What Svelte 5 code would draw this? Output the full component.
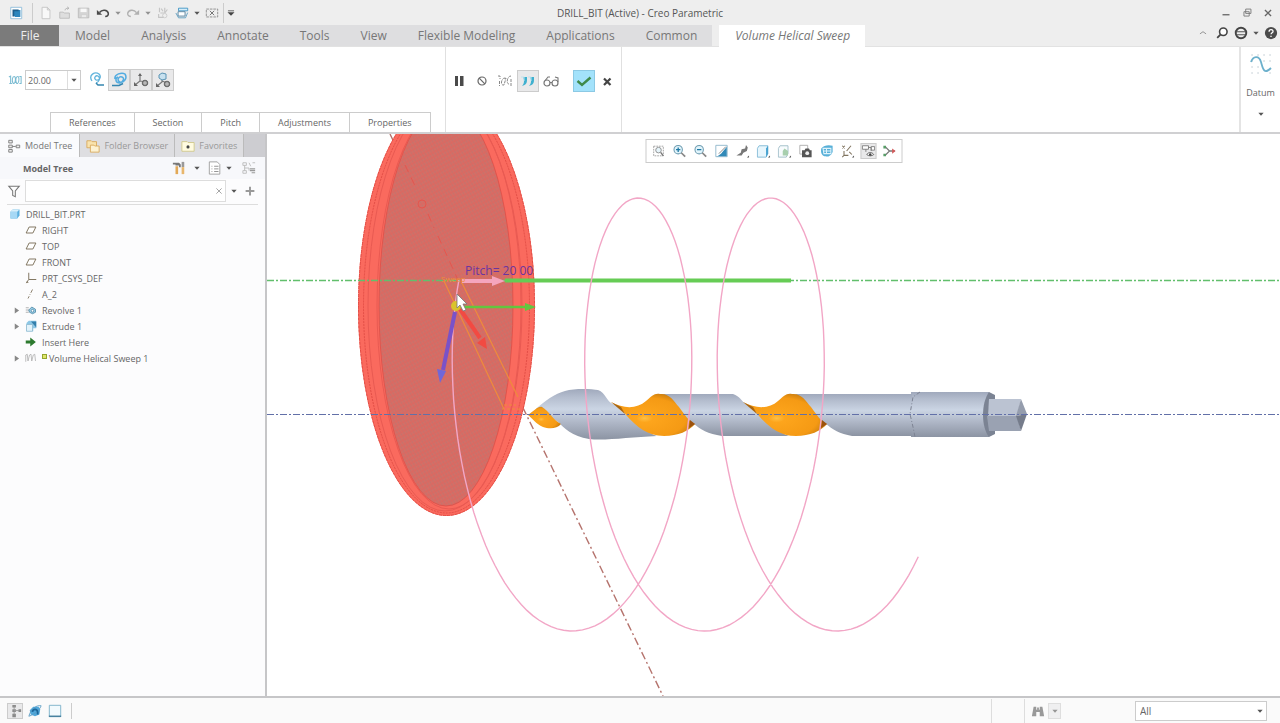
<script>
	let pitch = $state('20.00');
	let search = $state('');
	let filter = $state('All');

	const ribbonTabs = [
		'Model',
		'Analysis',
		'Annotate',
		'Tools',
		'View',
		'Flexible Modeling',
		'Applications',
		'Common'
	];
	const panels = ['References', 'Section', 'Pitch', 'Adjustments', 'Properties'];

	const quickAccess = [
		{ icon: 'newFile', label: 'New', dim: true },
		{ icon: 'open', label: 'Open', dim: true },
		{ icon: 'save', label: 'Save', dim: true },
		{ icon: 'undo', label: 'Undo' },
		{ icon: 'caret', label: 'Undo list', dim: true },
		{ icon: 'redo', label: 'Redo', dim: true },
		{ icon: 'caret', label: 'Redo list', dim: true },
		{ icon: 'regen', label: 'Regenerate', dim: true },
		{ icon: 'windows', label: 'Windows' },
		{ icon: 'caret', label: 'Windows list' },
		{ icon: 'closeWin', label: 'Close window' }
	];

	const viewTools = [
		{ icon: 'refit', label: 'Refit' },
		{ icon: 'zoomIn', label: 'Zoom in' },
		{ icon: 'zoomOut', label: 'Zoom out' },
		{ icon: 'repaint', label: 'Repaint' },
		{ icon: 'render', label: 'Rendering options' },
		{ icon: 'display', label: 'Display style' },
		{ icon: 'saved', label: 'Saved orientations' },
		{ icon: 'camera', label: 'View manager' },
		{ icon: 'persp', label: 'Perspective view' },
		{ icon: 'datumShow', label: 'Datum display filters' },
		{ icon: 'annot', label: 'Annotation display', on: true },
		{ icon: 'spin', label: 'Spin center' }
	];

	const tree = [
		{ icon: 'plane', name: 'RIGHT' },
		{ icon: 'plane', name: 'TOP' },
		{ icon: 'plane', name: 'FRONT' },
		{ icon: 'csys', name: 'PRT_CSYS_DEF' },
		{ icon: 'axis', name: 'A_2' },
		{ icon: 'revolve', name: 'Revolve 1', open: true },
		{ icon: 'extrude', name: 'Extrude 1', open: true },
		{ icon: 'insert', name: 'Insert Here' },
		{ icon: 'sweep', name: 'Volume Helical Sweep 1', open: true, fresh: true }
	];

	// helix seen from the side, one turn is 132.5 units along the axis
	function helix(from, to) {
		const pts = [];
		for (let a = from; a < to; a += 0.06) {
			const x = 572 + (132.5 * a) / (2 * Math.PI) + 84 * Math.sin(a);
			const y = 414.5 + 216.5 * Math.cos(a);
			pts.push(x.toFixed(1) + ',' + y.toFixed(1));
		}
		return pts.join(' ');
	}
	const trajectory = helix(-2.24, 4 * Math.PI + 0.9);

	const icons = {
		caret: '<path d="M5 6.5h6L8 10z" fill="#555"/>',
		app: '<path d="M2 1.5h12.500v13H2z" fill="#fff" stroke="#8cbcd9"/><path d="M5 4.500h8v8H7l-2-2z" fill="#2b86bd"/><path d="M4 4v8h2V6h5V4z" fill="#1b5f8d"/>',
		newFile: '<path d="M3.500 1.500h6l3 3v10h-9zM9.500 1.500v3h3" fill="#fff" stroke="#a9a9a9"/>',
		open: '<path d="M2 7h4l1 1h6v6H2z" fill="#d4d4d4" stroke="#999"/><path d="M8 5c0-2 2-2.500 4-2.500M10.500 1l2 1.500-2 1.500" fill="none" stroke="#888"/>',
		save: '<path d="M1.500 2.500h12v11h-12z" fill="#c4c4c4" stroke="#999"/><path d="M4 3h7v4H4z" fill="#fff"/><path d="M5 10h6v3H5z" fill="#eee" stroke="#aaa" stroke-width=".6"/>',
		undo: '<path d="M4 7.500c3-4 9-3 10 .5.400 2-.7 4-3.500 4" fill="none" stroke="#4b4b4b" stroke-width="1.800"/><path d="M1 4.500v5.500h6z" fill="#4b4b4b"/>',
		redo: '<path d="M12 7.500c-3-4-9-3-10 .5-.4 2 .7 4 3.500 4" fill="none" stroke="#888" stroke-width="1.600"/><path d="M15 4.500v5.500H9z" fill="#888"/>',
		regen: '<path d="M4 2v5M3 9v4h6M6 3l2 3M10 2v6M13 4l-3 4M5 8h4" fill="none" stroke="#aaa" stroke-width="1.300"/><circle cx="10" cy="11" r="2.500" fill="none" stroke="#b5b5b5"/>',
		windows: '<path d="M4 2.500h10.500v3H4z" fill="#d6eefa" stroke="#3e93c3"/><path d="M3.500 6.500h8v5h-8z" fill="#fff" stroke="#4f7f9b"/><path d="M1 8l3 5.500h8l2.500-6" fill="none" stroke="#5a9cbf"/>',
		closeWin: '<path d="M1.500 3.500h13v9h-13z" fill="none" stroke="#888" stroke-dasharray="3 1"/><path d="M5.500 5.500l5 5M10.500 5.500l-5 5" stroke="#666"/>',
		more: '<path d="M4.500 5.500h7" stroke="#555"/><path d="M4 7h8l-4 4z" fill="#444"/>',
		minimize: '<path d="M4 10h8" stroke="#666" stroke-width="1.500"/>',
		restore: '<path d="M6.500 3.500h6v5h-6zM4.500 6.500h6v5h-6z" fill="#eee" stroke="#777"/>',
		close: '<path d="M4.500 4.500l7 7M11.500 4.500l-7 7" stroke="#666" stroke-width="1.500"/>',
		up: '<path d="M4.500 9L8 6.500 11.500 9" fill="none" stroke="#888"/>',
		find: '<circle cx="9.500" cy="6.500" r="4.300" fill="#fff" stroke="#444" stroke-width="1.800"/><path d="M6.200 9.800L2.500 13.500" stroke="#444" stroke-width="2"/>',
		globe: '<circle cx="8" cy="8" r="6" fill="#eee" stroke="#444" stroke-width="2.200"/><path d="M2 6.500h12M3 10h10" stroke="#555" stroke-width="1.200"/>',
		help: '<circle cx="8" cy="8" r="7" fill="#4b4b4b"/><path d="M5.800 6.500c0-3 4.500-3 4.500-.3 0 1.500-2.200 1.700-2.200 3.300M8 11v1.500" fill="none" stroke="#fff" stroke-width="1.500"/>',
		pitchCoil: '<path d="M1 4.500l2-1v8M1.500 12h3M6 12c-2-3-1-8 1-8s2 6 0 8zM10 12c-2-3-1-8 1-8s2 6 0 8zM13 4h2v8h-2" fill="none" stroke="#7cbcd2" stroke-width="1.200"/>',
		leftHand: '<path d="M3 9C-1 3 6-1 10 2c3 3 0 7-3 6-3-2 0-5 2-4 3 2 1 6-2 7" fill="none" stroke="#62b4dc" stroke-width="1.300"/><path d="M7 11l2 2h6" fill="none" stroke="#3686b0" stroke-width="1.600"/>',
		rightHand: '<path d="M4 7c-1-5 7-7 10-5 3 5-2 9-5 8-4-2-1-6 2-5s1 5-2 6c-5 0-5-5-2-6" fill="none" stroke="#53ace0" stroke-width="1.500"/><path d="M1 13.500h7l4-2" fill="none" stroke="#3686b0" stroke-width="1.600"/>',
		frame: '<path d="M7 2v7l-5 4M7 9l7 1" fill="none" stroke="#777" stroke-width="1.200"/><path d="M5 4l2-3 2 3zM1 10v4h4z" fill="#666"/><circle cx="12" cy="11" r="2.800" fill="#888" stroke="#666"/><path d="M10 11h4M12 9v4" stroke="#ddd" stroke-width=".7"/>',
		frameFit: '<path d="M7 6v4l-5 4M7 9l5 2" fill="none" stroke="#777" stroke-width="1.200"/><path d="M4 3l3-2 4 1v5l-4 1-3-2z" fill="#c8e1ef" stroke="#5a94b5"/><path d="M1 11v4h4z" fill="#666"/><circle cx="12" cy="12" r="2.800" fill="#888" stroke="#666"/><path d="M10 12h4M12 10v4" stroke="#ddd" stroke-width=".7"/>',
		pause: '<path d="M4 3h3v10H4zM9 3h3.500v10H9z" fill="#4a4a4a"/>',
		none: '<circle cx="8" cy="8" r="4" fill="none" stroke="#666" stroke-width="1.200"/><path d="M5.200 5.200l5.600 5.600" stroke="#666" stroke-width="1.200"/>',
		unattached: '<path d="M1 3h2v3M2.500 8v5M8 5c-4 0-5 8-1 7l2-7-2 1M14 3c-4 0-5 8-2 8M14 6v7" fill="none" stroke="#888" stroke-dasharray="3 1"/>',
		attached: '<path d="M3 4h4v3c0 3-1 5-5 6 2-2 2-4 2-6zM10 4h4v3c0 3-1 5-5 6 2-2 2-4 2-6z" fill="#3fb0cf"/><path d="M1 4h3v4M8 4h3v4" fill="none" stroke="#bfe4ef"/>',
		glasses: '<circle cx="4" cy="10" r="3" fill="none" stroke="#777" stroke-width="1.200"/><circle cx="12" cy="10" r="3" fill="none" stroke="#777" stroke-width="1.200"/><path d="M7 9.500h2M1 9l4-5h2M15 9V5l-3-1" fill="none" stroke="#777" stroke-width="1.100"/>',
		check: '<path d="M1.500 8l4.500 4 8.500-7.500" fill="none" stroke="#3f8a4b" stroke-width="2.400"/>',
		cancel: '<path d="M5 5.500l6.500 6.500M11.500 5.500L5 12" stroke="#444" stroke-width="2.200"/>',
		treeTab: '<path d="M2 1.500h4v3H2zM2 7h4v3H2zM2 12h4v3H2zM10.500 7h4v3h-4zM6 8.500h4" fill="#eee" stroke="#777"/>',
		folders: '<path d="M1 2h5l1 1h5v7H1z" fill="#f9e3ad" stroke="#d8a85a"/><path d="M5 7h4l1 1h5v7H5z" fill="#fdf2d2" stroke="#d8a85a"/>',
		favorites: '<path d="M1 3h6l1 1h7v10H1z" fill="#fffbe0" stroke="#cfc789"/><circle cx="8" cy="9" r="1.800" fill="#444"/>',
		tools: '<path d="M1 2h7l2 2v3H8V5H4V4H1z" fill="#777"/><path d="M4 6h3v9H4z" fill="#e2a956"/><path d="M11 1h3v6h-3z" fill="#999"/><path d="M11 7h3v8h-3z" fill="#e8b76c"/>',
		sheet: '<path d="M1.500 1h9l3 3v11h-12z" fill="#fff" stroke="#999"/><path d="M4 6h1M7 6h5M4 9h1M7 9h5M4 12h1M7 12h5" stroke="#888"/>',
		treeFind: '<path d="M1 2h4v3H1zM1 11h4v3H1zM3 5v6M8 2l2 4M12 2h3M3 8h5v3" fill="none" stroke="#b9b9b9"/><path d="M9 9h6M9 11h6M11 13.500h4" stroke="#999" stroke-width="1.200"/>',
		funnel: '<path d="M2 2.500h12L9.500 8v6.500l-3-1.500V8z" fill="#fff" stroke="#777" stroke-width="1.200"/>',
		clear: '<path d="M5 5l6 6M11 5l-6 6" stroke="#999"/>',
		plus: '<path d="M8 3v10M3 8h10" stroke="#999" stroke-width="2.200"/>',
		part: '<path d="M2 5l3-3h9v8l-3 4H2z" fill="#5aaede"/><path d="M2 5h9v9H2z" fill="#a6d8f5"/><path d="M2 5l3-3h9l-3 3z" fill="#d6effc"/>',
		plane: '<path d="M5.500 4h9l-4 8h-9z" fill="#fff" stroke="#80745f" stroke-width="1.300"/>',
		csys: '<path d="M5 1v9h10M5 10l-3 4" fill="none" stroke="#80745f" stroke-width="1.300"/><path d="M3 12l-2 3 4-1z" fill="#80745f"/>',
		axis: '<path d="M10 2L4 14" stroke="#80745f" stroke-width="1.200" stroke-dasharray="5 2 1 2"/>',
		revolve: '<path d="M1 5h4M1 11h4M1 8h5" stroke="#999"/><path d="M5 8l4-4 5 3v4l-4 2-4-2z" fill="#9bcfe8" stroke="#437f9e"/><circle cx="10" cy="9" r="1.800" fill="#fff" stroke="#437f9e"/>',
		extrude: '<path d="M5 1h10v10h-4v4H2V4z" fill="#8cc7e6"/><path d="M2 6h8v9H2z" fill="#e3f3fb" stroke="#8bb7cd"/><path d="M8 2h7v8z" fill="#347fab"/>',
		insert: '<path d="M1 6h6V2l7.500 6L7 14v-4H1z" fill="#2d7a2f"/>',
		sweep: '<path d="M1 13V4l2-1 1 9 2-8 2-1 1 9 2-8 2-1 1 9" fill="none" stroke="#aaa"/>',
		refit: '<path d="M2.500 2.500h11v11h-11z" fill="none" stroke="#9a9a9a" stroke-dasharray="2 1"/><circle cx="8" cy="7" r="3.200" fill="#e6f4fa" stroke="#888"/><path d="M10.500 9.500l3 4" stroke="#777" stroke-width="1.600"/>',
		zoomIn: '<circle cx="6.500" cy="6.500" r="4.800" fill="#e1f4fb" stroke="#6d9bb0" stroke-width="1.200"/><path d="M4 6.500h5M6.500 4v5" stroke="#1f78a4" stroke-width="1.500"/><path d="M10 10l4.500 4.500" stroke="#888" stroke-width="2"/>',
		zoomOut: '<circle cx="6.500" cy="6.500" r="4.800" fill="#e1f4fb" stroke="#6d9bb0" stroke-width="1.200"/><path d="M4 6.500h5" stroke="#1f78a4" stroke-width="1.500"/><path d="M10 10l4.500 4.500" stroke="#888" stroke-width="2"/>',
		repaint: '<path d="M1.500 1.500h13v13h-13z" fill="#fff" stroke="#8cb5c9"/><path d="M14 3v11H2c5-1 7-5 12-11z" fill="#3189b7"/><path d="M13 3L5 11" stroke="#777"/>',
		render: '<path d="M1 13l5-3 1-4 4-1 1-4 2 3-1 4-4 2-2 3z" fill="#777"/><path d="M15.500 15.500V13L13 15.500z" fill="#555"/>',
		display: '<path d="M1 5l2-3h10v9l-2 4H1z" fill="#e7f6fd" stroke="#7ab6d3"/><path d="M11 5l2-3v9l-2 4z" fill="#3a9bcc"/><path d="M15.500 15.500V13L13 15.500z" fill="#555"/>',
		saved: '<path d="M1 5l2-3h9v9l-2 4H1z" fill="#f7fbfd" stroke="#9dbac6"/><path d="M8 5l4 3v5H6V8z" fill="#a8cfae"/><path d="M15.500 15.500V13L13 15.500z" fill="#555"/>',
		camera: '<path d="M1.500 1.500h9v10h-9z" fill="#fff" stroke="#aaa"/><path d="M4 7h3l1-2h4l1 2h2v8H4z" fill="#555"/><circle cx="10" cy="10.500" r="2.200" fill="#eee"/>',
		persp: '<path d="M2 5c3-4 9-4 13-3v7c-2 5-6 6-8 5-4 0-6-4-5-9z" fill="#58b0d8"/><path d="M4 5h9v6H5zM4 8h9M8 5v6" fill="none" stroke="#dff3fc" stroke-width="1.200"/>',
		datumShow: '<path d="M2 2l3 3M5 2L2 5M7 8l5-6M4 8v5h5M4 13l-2 2M10 9l3 3" fill="none" stroke="#80745f" stroke-width="1.200"/><path d="M15.500 15.500V13L13 15.500z" fill="#555"/>',
		annot: '<path d="M1 2h7v4H1zM5 6v3M8 4h3v4M11 3h4v4h-4z" fill="#fff" stroke="#777"/><path d="M6 12c2-3 6-3 8 0-2 2-6 2-8 0z" fill="#fff" stroke="#555"/><circle cx="10" cy="12" r="1.400" fill="#444"/>',
		spin: '<path d="M3 3l5 5-5 5M8 8h6" fill="none" stroke="#777" stroke-width="1.500"/><path d="M1 2h3v3H1zM1 11h3v3H1z" fill="#599d68"/><path d="M11 5l4 3-4 3z" fill="#d25a5a"/>',
		statTree: '<path d="M5 1h4v3H5zM5 6h4v3H5zM5 11h4v4H5zM12 6h3v3h-3z" fill="#888"/><path d="M7 2v11M7 7.500h6" stroke="#999"/>',
		statWeb: '<path d="M2 7l4-4h6l2 3-1 6-5 2-5-2z" fill="#4fa7da"/><path d="M1 14C3 6 9 1 15 2c-1 3-5 9-14 12" fill="none" stroke="#5a9cc4"/><path d="M5 9c1-4 5-4 6 0v3" fill="none" stroke="#1d679b" stroke-width="2"/>',
		statFull: '<path d="M1.500 1.500h13v13h-13z" fill="#f2fafd" stroke="#77aec8"/><path d="M1 14h14" stroke="#447f9d" stroke-width="1.600"/>',
		binoc: '<path d="M3 3h3v3l1 1V4h2v3l1-1V3h3l2 11h-5V9H6v5H1z" fill="#999"/>',
		datum: '<path d="M3 4h.1M9 4h.1M15 4h.1M21 4h.1M3 10h.1M15 10h.1M21 10h.1M3 16h.1M9 16h.1M3 22h.1M9 22h.1M21 22h.1" stroke="#c3ced4" stroke-width="1.500" stroke-linecap="round"/><path d="M2 11c2-6 8-7 10 0s3 13 10 6" fill="none" stroke="#6cb0cc" stroke-width="1.800"/>'
	};
</script>

{#snippet icon(name)}
	<svg class="icon" viewBox="0 0 16 16" aria-hidden="true">{@html icons[name]}</svg>
{/snippet}

{#snippet tool(name, label, cls = '')}
	<button type="button" class="tool {cls}" aria-label={label}>{@render icon(name)}</button>
{/snippet}

<div class="app">
	<header class="titlebar">
		<div class="quick">
			{@render icon('app')}
			<span class="sep first"></span>
			{#each quickAccess as q}
				{@render tool(q.icon, q.label, (q.icon === 'caret' ? 'narrow ' : '') + (q.dim ? 'dim' : ''))}
			{/each}
			<span class="sep"></span>
			{@render tool('more', 'Customize toolbar', 'narrow')}
		</div>
		<h1>DRILL_BIT (Active) - Creo Parametric</h1>
		<div class="window-buttons">
			{@render tool('minimize', 'Minimize')}
			{@render tool('restore', 'Restore')}
			{@render tool('close', 'Close')}
		</div>
	</header>

	<nav class="tabs">
		<button type="button" class="tab file">File</button>
		{#each ribbonTabs as t}
			<button type="button" class="tab">{t}</button>
		{/each}
		<button type="button" class="tab active">Volume Helical Sweep</button>
		<div class="tab-tools">
			{@render tool('up', 'Minimize ribbon')}
			{@render tool('find', 'Command search')}
			{@render tool('globe', 'Learning')}
			{@render tool('caret', 'Learning list', 'narrow')}
			{@render tool('help', 'Help')}
		</div>
	</nav>

	<section class="ribbon">
		<div class="options">
			<div class="controls">
				{@render icon('pitchCoil')}
				<div class="combo">
					<input type="text" aria-label="Pitch value" bind:value={pitch} />
					{@render tool('caret', 'Recent values', 'drop')}
				</div>
				<div class="toggles">
					{@render tool('leftHand', 'Left handed rule', 'big')}
					{@render tool('rightHand', 'Right handed rule', 'big on')}
					{@render tool('frame', 'Axis orientation', 'big on')}
					{@render tool('frameFit', 'Tool orientation', 'big on')}
				</div>
			</div>
			<div class="panels">
				{#each panels as p}
					<button type="button" class="panel">{p}</button>
				{/each}
			</div>
		</div>
		<div class="actions">
			{@render tool('pause', 'Pause', 'big')}
			{@render tool('none', 'No preview', 'big')}
			{@render tool('unattached', 'Unattached preview', 'big')}
			{@render tool('attached', 'Attached preview', 'big on')}
			{@render tool('glasses', 'Verify', 'big')}
			{@render tool('check', 'OK', 'big ok')}
			{@render tool('cancel', 'Cancel', 'big')}
		</div>
		<button type="button" class="datum">
			<svg class="datum-icon" viewBox="0 0 24 26" aria-hidden="true">{@html icons.datum}</svg>
			<span>Datum</span>
			{@render icon('caret')}
		</button>
	</section>

	<main>
		<aside>
			<div class="side-tabs">
				<button type="button" class="side-tab current">{@render icon('treeTab')}Model Tree</button>
				<button type="button" class="side-tab">{@render icon('folders')}Folder Browser</button>
				<button type="button" class="side-tab">{@render icon('favorites')}Favorites</button>
			</div>
			<div class="side-head">
				<h2>Model Tree</h2>
				{@render tool('tools', 'Settings')}
				{@render tool('caret', 'Settings list')}
				{@render tool('sheet', 'Show')}
				{@render tool('caret', 'Show list', 'narrow')}
				{@render tool('treeFind', 'Find in tree', 'last')}
			</div>
			<div class="search">
				{@render icon('funnel')}
				<div class="search-box">
					<input type="text" aria-label="Search tree" bind:value={search} />
					{@render tool('clear', 'Clear', 'drop')}
				</div>
				{@render tool('caret', 'Search options')}
				{@render tool('plus', 'Add filter')}
			</div>
			<ul class="tree">
				<li class="root">{@render icon('part')}<span>DRILL_BIT.PRT</span></li>
				{#each tree as node}
					<li>
						{#if node.open}
							<svg class="arrow" viewBox="0 0 8 8" aria-hidden="true">
								<path d="M2 0.500v7L7 4z" fill="#888" />
							</svg>
						{:else}
							<i class="arrow"></i>
						{/if}
						{@render icon(node.icon)}
						{#if node.fresh}<i class="fresh"></i>{/if}
						<span>{node.name}</span>
					</li>
				{/each}
			</ul>
		</aside>

		<div class="canvas">
			<svg class="scene" viewBox="267 134 1013 562" preserveAspectRatio="xMinYMin meet" role="img" aria-label="Drill bit">
				<defs>
					<linearGradient id="steel" x1="0" y1="0" x2="0" y2="1">
						<stop offset="0" stop-color="#a0a9bc" />
						<stop offset="0.15" stop-color="#b3bccd" />
						<stop offset="0.4" stop-color="#cbd5e4" />
						<stop offset="0.65" stop-color="#b0b8c8" />
						<stop offset="1" stop-color="#8c94a3" />
					</linearGradient>
					<radialGradient id="gold" cx="0.4" cy="0.58" r="0.65">
						<stop offset="0" stop-color="#ffc044" />
						<stop offset="0.15" stop-color="#fda51c" />
						<stop offset="0.75" stop-color="#f59a14" />
						<stop offset="1" stop-color="#c2780e" />
					</radialGradient>
					<pattern id="mesh" width="3" height="4" patternUnits="userSpaceOnUse" patternTransform="rotate(-28)">
						<path d="M0 0v4" stroke="#b07a76" stroke-width="1.200" />
						<path d="M0 2h3" stroke="#ea5f58" stroke-width="0.800" />
					</pattern>
				</defs>

				<!-- shank and flutes -->
				<path d="M911 392h78v45h-78z" fill="url(#steel)" />
				<path d="M797 394H912V436H852C840 434 832 429 826 424C818 422 800 408 792 396z" fill="url(#steel)" />
				<path d="M660 394H733C740 396 742 402 746 404C760 410 775 431 789 436H722C708 434 700 429 694 424C686 422 668 408 660 396z" fill="url(#steel)" />
				<path d="M534 411C545 400 555 394 565 391C575 388 592 389 598 390C606 393 606 401 613 404C628 410 643 432 657 436C630 437 605 441 589 439C572 436 564 428 558 422L543 412z" fill="url(#steel)" />
				<path d="M528 415C534 411 538 406 542 407C549 411 553 420 561 424C557 429 549 429 543 427C536 424 532 418 528 415z" fill="url(#gold)" />
				<g id="flute">
					<path d="M611 402C624 409 637 409 646 401C652 396 654 393 660 394C669 393 673 400 679 407C685 415 689 422 695 424C689 431 678 436 664 436C647 436 636 426 627 416C622 410 618 406 611 402z" fill="url(#gold)" />
					<path d="M611 402l10 5 4 7z" fill="#a9650f" />
					<path d="M690 420l5 4-6 4z" fill="#9c520d" />
				</g>
				<use href="#flute" x="132" />
				<path d="M920 392l-7 5-3 17 3 13 2 10" fill="none" stroke="#7d8393" stroke-dasharray="4 2 1 2" />
				<path d="M989 392l6 3v39l-6 3c-8-10-8-34 0-45z" fill="#7b8393" />
				<path d="M989 399h32l-4 17h-29z" fill="#bbc3d2" />
				<path d="M987 416h30l4 15h-32z" fill="#9aa2b2" />
				<path d="M1021 399l6 15-11 2z" fill="#959dad" />
				<path d="M1016 416l11-2-6 17z" fill="#757c8b" />

				<!-- helix removed volume -->
				<path d="M390 134L663 696" stroke="#b5736d" stroke-width="1.400" stroke-dasharray="8 3 2 3" />
				<ellipse cx="446.500" cy="306" rx="88.500" ry="210" fill="#fa6a5e" />
				<g fill="none" stroke="#e24d45">
					<ellipse cx="446.500" cy="306" rx="88" ry="209.500" stroke-dasharray="3 1" />
					<ellipse cx="446.500" cy="306" rx="83" ry="207" stroke-dasharray="2 1" />
					<ellipse cx="445" cy="306" rx="77" ry="205" stroke="#e95a52" />
					<ellipse cx="449" cy="306" rx="72" ry="203" stroke="#e95a52" />
				</g>
				<ellipse cx="446" cy="306" rx="67" ry="200" fill="#d56e66" />
				<ellipse cx="446" cy="306" rx="67" ry="200" fill="url(#mesh)" opacity="0.700" stroke="#df4b44" />
				<g stroke="#e5564e" fill="none">
					<path d="M405 165l12 25M428 214l6 14M438 236l20 44" stroke-dasharray="8 6" />
					<circle cx="422" cy="204" r="4" />
				</g>

				<!-- datum axes -->
				<path d="M267 280.500H1280" stroke="#62bf6c" stroke-width="1.500" stroke-dasharray="7 2 2 2" />
				<path d="M267 414.500H1280" stroke="#6270a8" stroke-width="1.200" stroke-dasharray="7 2 2 2" />
				<path d="M505 280.500H791" stroke="#66cc55" stroke-width="4" />

				<polyline points={trajectory} fill="none" stroke="#f2a6c6" stroke-width="1.400" />

				<g fill="none" stroke="#ee8b3c" stroke-width="1.200">
					<path d="M444 281L504 409M462 283L518 397" />
					<path d="M502 409h18M504 405h12" stroke-dasharray="3 2" />
				</g>
				<path d="M458 307H526" stroke="#62c63f" stroke-width="2.500" />
				<path d="M525 303l11 4-11 4z" fill="#62c63f" />
				<path d="M460 309L480 338" stroke="#f24a42" stroke-width="4" />
				<path d="M477 343l8-6 2 12z" fill="#f24a42" />
				<path d="M455 312L443 370" stroke="#7a52c8" stroke-width="4" />
				<path d="M437 369l9 2-6 12z" fill="#7067d8" />
				<path d="M462 281H494" stroke="#f5a5bd" stroke-width="4" />
				<path d="M492 276l13 5-13 5z" fill="#f5a5bd" />
				<circle cx="456" cy="306" r="5" fill="#d9c32c" />
				<text x="441" y="282" class="note">Sweep</text>
				<text x="465" y="275" class="dim-text">Pitch= 20 00</text>
				<path d="M457 294v14l3-3 3 6 3-1-3-6h4z" fill="#fff" stroke="#777" stroke-width="0.800" />
			</svg>
			<div class="view-bar">
				{#each viewTools as v}
					{@render tool(v.icon, v.label, v.on ? 'on' : '')}
				{/each}
			</div>
		</div>
	</main>

	<footer>
		<div class="status-left">
			{@render tool('statTree', 'Toggle tree', 'on')}
			{@render tool('statWeb', 'Toggle browser')}
			{@render tool('statFull', 'Full screen')}
			<span class="sep"></span>
		</div>
		<div class="status-cell"></div>
		<div class="status-find">
			{@render tool('binoc', 'Find')}
			{@render tool('caret', 'Find list', 'drop on dim')}
		</div>
		<div class="filter">
			<select aria-label="Selection filter" bind:value={filter}>
				<option>All</option>
				<option>Features</option>
				<option>Geometry</option>
			</select>
			{@render icon('caret')}
		</div>
	</footer>
</div>

<style>
	:global(body) {
		margin: 0;
	}
	.app {
		display: flex;
		flex-direction: column;
		min-height: 100vh;
		font-family: 'Open Sans', 'Noto Sans', sans-serif;
		font-size: 9px;
		color: #666;
		background: #fff;
	}
	button,
	input,
	select {
		box-sizing: border-box;
		margin: 0;
		padding: 0;
		border: 0;
		background: none;
		font: inherit;
		color: inherit;
	}
	.icon {
		display: block;
		flex: none;
		width: 14px;
		height: 14px;
	}
	.tool {
		display: flex;
		align-items: center;
		justify-content: center;
		flex: none;
		width: 16px;
		height: 16px;
	}
	.tool.narrow {
		width: 8px;
	}
	.tool.dim {
		opacity: 0.6;
	}
	.tool.on {
		background: #e9e9ea;
		outline: 1px solid #ccc;
		outline-offset: -1px;
	}
	.tool.big {
		width: 22px;
		height: 22px;
	}
	.tool.big .icon {
		width: 16px;
		height: 16px;
	}
	.tool.ok {
		margin-left: 10px;
		background: #a3e2fb;
		outline: 1px solid #8cc9e4;
		outline-offset: -1px;
	}
	.sep {
		width: 1px;
		align-self: stretch;
		margin: 0 4px;
		background: #ccc;
	}

	/* title bar */
	.titlebar {
		display: grid;
		grid-template-columns: 1fr auto 1fr;
		align-items: center;
		height: 25px;
		background: #eee;
	}
	.quick {
		display: flex;
		align-items: center;
		gap: 3px;
		height: 20px;
		padding-left: 9px;
	}
	.quick .sep {
		margin: 0;
	}
	.quick .first {
		margin: 0 2px 0 6px;
	}
	h1 {
		margin: 0;
		font-size: 10px;
		font-weight: 400;
		color: #555;
	}
	.window-buttons {
		display: flex;
		justify-content: flex-end;
		gap: 5px;
		padding-right: 4px;
	}

	/* ribbon tabs */
	.tabs {
		display: flex;
		height: 22px;
		background: #eee;
		border-bottom: 1px solid #e2e2e2;
		box-sizing: border-box;
	}
	.tab {
		padding: 0 15px 0 16px;
		background: #dedee0;
		font-size: 12px;
		line-height: 20px;
		color: #777;
		white-space: nowrap;
	}
	.tab.file {
		width: 59px;
		background: #7b7b7b;
		color: #eee;
	}
	.tab.active {
		margin: 0 0 -1px 7px;
		background: #fff;
		font-style: italic;
	}
	.tab-tools {
		display: flex;
		align-items: center;
		gap: 3px;
		margin-left: auto;
		padding: 0 1px;
		height: 16px;
	}

	/* ribbon */
	.ribbon {
		display: flex;
		height: 85px;
		border-bottom: 2px solid #d0d0d2;
	}
	.options {
		display: flex;
		flex-direction: column;
		justify-content: space-between;
		box-sizing: border-box;
		width: 446px;
		border-right: 1px solid #e0e0e0;
	}
	.controls {
		display: flex;
		align-items: center;
		gap: 3px;
		padding: 22px 0 0 8px;
	}
	.combo {
		display: flex;
		width: 54px;
		height: 18px;
		border: 1px solid #ccc;
	}
	.combo input {
		width: 41px;
		padding-left: 2px;
	}
	.tool.drop {
		width: 13px;
	}
	.combo .drop,
	.search-box .drop {
		height: auto;
	}
	.combo .drop {
		border-left: 1px solid #ddd;
	}
	.toggles {
		display: flex;
		padding-left: 2px;
	}
	.panels {
		display: flex;
		padding-left: 50px;
	}
	.panel {
		padding: 0 18px;
		height: 20px;
		border: 1px solid #ccc;
		border-width: 1px 1px 0 0;
	}
	.panel:first-child {
		border-left-width: 1px;
	}
	.actions {
		display: flex;
		align-items: flex-start;
		gap: 1px;
		padding: 23px 3px 0 2px;
		border-right: 1px solid #e0e0e0;
	}
	.datum {
		display: flex;
		flex-direction: column;
		align-items: center;
		justify-content: space-between;
		width: 41px;
		margin-left: auto;
		padding: 4px 0 11px;
		border-left: 2px solid #e4e4e4;
	}
	.datum-icon {
		width: 24px;
		height: 26px;
	}

	/* model tree */
	main {
		display: flex;
		flex: 1;
	}
	aside {
		flex: none;
		box-sizing: border-box;
		width: 267px;
		border-right: 2px solid #c6c6c8;
		background: #fcfcfd;
	}
	.side-tabs {
		display: flex;
		height: 23px;
		background: #cdcdd1;
	}
	.side-tab {
		display: flex;
		align-items: center;
		gap: 4px;
		padding: 0 6px;
		border-right: 1px solid #bbb;
		background: #dedee1;
		color: #999;
		white-space: nowrap;
	}
	.side-tab.current {
		padding: 0 7px;
		background: #fafbfd;
		color: #777;
	}
	.side-head {
		display: flex;
		align-items: center;
		gap: 2px;
		height: 22px;
		padding-right: 8px;
		background: #f7f8fb;
	}
	.side-head .last {
		margin-left: 6px;
	}
	h2 {
		flex: 1;
		margin: 0;
		padding-left: 23px;
		font-size: 9px;
		font-weight: 700;
	}
	.search {
		display: flex;
		align-items: center;
		height: 23px;
		margin: 0 7px 1px;
		padding-bottom: 2px;
		border-bottom: 1px solid #ddd;
		box-sizing: content-box;
	}
	.search-box {
		display: flex;
		flex: 1;
		height: 20px;
		margin-left: 4px;
		border: 1px solid #ddd;
		background: #fff;
	}
	.search-box input {
		flex: 1;
		min-width: 0;
	}
	.tree {
		margin: 0;
		padding: 0 0 0 13px;
		list-style: none;
	}
	.tree li {
		display: flex;
		align-items: center;
		gap: 5px;
		height: 16px;
		white-space: nowrap;
	}
	.tree .icon {
		width: 12px;
		height: 12px;
	}
	.tree .root {
		margin-left: -4px;
	}
	.arrow {
		width: 7px;
		height: 7px;
	}
	.fresh {
		width: 3px;
		height: 3px;
		margin: -4px -3px 0 0;
		border: 1px solid #93a52e;
		background: #dfe66a;
	}

	/* graphics area */
	.canvas {
		position: relative;
		flex: 1;
	}
	.scene {
		display: block;
		width: 100%;
	}
	.note {
		font-size: 8px;
		fill: #f09035;
	}
	.dim-text {
		font-size: 12px;
		fill: #6a35a0;
	}
	.view-bar {
		position: absolute;
		top: 5px;
		left: 50%;
		display: flex;
		align-items: center;
		gap: 5px;
		height: 22px;
		padding: 0 4px;
		border: 1px solid #ccc;
		background: #fff;
		transform: translateX(-50%);
	}

	/* status bar */
	footer {
		display: flex;
		align-items: center;
		height: 25px;
		border-top: 2px solid #c6c6c8;
		background: #fafafa;
	}
	.status-left {
		display: flex;
		gap: 4px;
		flex: 1;
		padding-left: 7px;
	}
	.status-cell {
		width: 32px;
		height: 24px;
		border: 1px solid #ddd;
		border-width: 0 1px;
	}
	.status-find {
		display: flex;
		align-items: center;
		gap: 2px;
		width: 105px;
		padding-left: 5px;
	}
	.filter {
		display: grid;
		grid-template-columns: 1fr 13px;
		align-items: center;
		width: 130px;
		height: 18px;
		margin-right: 13px;
		border: 1px solid #ccc;
		background: #fff;
	}
	.filter select {
		grid-area: 1 / 1 / 2 / 3;
		height: 18px;
		padding-left: 4px;
		font-size: 10px;
		appearance: none;
	}
	.filter .icon {
		grid-area: 1 / 2;
		pointer-events: none;
	}
</style>
